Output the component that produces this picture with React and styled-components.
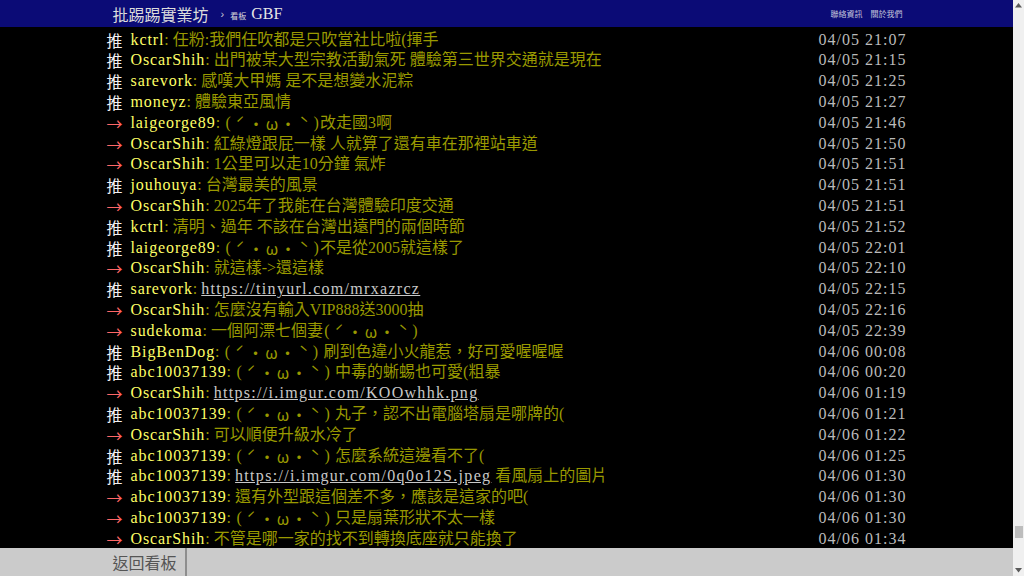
import React from "react";
import styled, { createGlobalStyle } from "styled-components";

const Global = createGlobalStyle`
  html, body {
    margin: 0;
    padding: 0;
    height: 100%;
    overflow: hidden;
    background: #000;
  }
  #root { height: 100%; }
`;

const Screen = styled.div`
  display: flex;
  height: 100vh;
  width: 100vw;
`;

const Page = styled.div`
  flex: 1;
  min-width: 0;
  display: flex;
  flex-direction: column;
  background: #000;
`;

const TopBar = styled.header`
  flex: none;
  height: 27px;
  background: #0b0b76;
`;

const BarInner = styled.div`
  width: 800px;
  height: 100%;
  margin: 0 auto;
  box-sizing: border-box;
  padding: 0 4px 0 6px;
  display: flex;
  align-items: center;
`;

const Logo = styled.a`
  font-family: "Noto Sans CJK TC", sans-serif;
  font-size: 16px;
  color: #dcdcdc;
  text-decoration: none;
  line-height: 1;
`;

const Crumb = styled.span`
  font-family: "Liberation Sans", sans-serif;
  font-size: 11px;
  color: #c8c8d8;
  margin: 0 6px 0 12px;
`;

const BoardLabel = styled.span`
  font-family: "Noto Sans CJK TC", sans-serif;
  font-size: 8px;
  color: #d8d8d8;
  margin-right: 5px;
`;

const BoardName = styled.a`
  font-family: "Liberation Serif", serif;
  font-size: 16px;
  color: #e6e6e6;
  text-decoration: none;
`;

const RightLinks = styled.nav`
  margin-left: auto;
  display: flex;
  gap: 8px;
`;

const TopLink = styled.a`
  font-family: "Noto Sans CJK TC", sans-serif;
  font-size: 8px;
  color: #c4c4dc;
  text-decoration: none;
`;

const Main = styled.main`
  flex: 1;
  min-height: 0;
  overflow: hidden;
`;

const Article = styled.div`
  width: 800px;
  margin: 0 auto;
  padding-top: 2.6px;
  font-family: "Liberation Serif", "Noto Sans CJK TC", serif;
  font-size: 16px;
  line-height: 20.8px;
`;

const Push = styled.div`
  display: flex;
  height: 20.8px;
  white-space: pre;
`;

const Tag = styled.span`
  flex: none;
  width: 24px;
  font-family: "Noto Sans CJK TC", sans-serif;
  color: ${(p) => (p.$arrow ? "#f66" : "#f2f2f2")};
`;

const UserId = styled.span`
  color: #ff6;
  letter-spacing: 0.9px;
`;

const Content = styled.span`
  color: #990;
`;

const Link = styled.a`
  color: #c8c8c8;
  text-decoration: underline;
  letter-spacing: 1.3px;
`;

const Cell = styled.span`
  display: inline-block;
  vertical-align: top;
  height: 20.8px;
  line-height: 20.8px;
  width: ${(p) => (p.$half ? 8 : 16)}px;
  text-align: center;
  font-family: ${(p) =>
    p.$half ? '"Liberation Serif", serif' : '"Noto Sans CJK TC", sans-serif'};
`;

const Time = styled.span`
  margin-left: auto;
  color: #bbb;
  letter-spacing: 1px;
`;

const NavBar = styled.footer`
  flex: none;
  height: 28px;
  background: #cbcbcb;
`;

const NavInner = styled.div`
  width: 800px;
  height: 100%;
  margin: 0 auto;
  display: flex;
  align-items: stretch;
`;

const BackLink = styled.a`
  display: flex;
  align-items: center;
  padding: 0 8px 0 6px;
  font-family: "Noto Sans CJK TC", sans-serif;
  font-size: 16px;
  color: #555;
  text-decoration: none;
`;

const Divider = styled.span`
  width: 2px;
  background: #8e8e8e;
`;

const ScrollTrack = styled.div`
  flex: none;
  width: 11px;
  background: #f0f0f0;
  display: flex;
  flex-direction: column;
  align-items: center;
`;

const ArrowBtn = styled.div`
  flex: none;
  height: 11px;
  width: 11px;
  display: flex;
  align-items: center;
  justify-content: center;
`;

const ThumbArea = styled.div`
  flex: 1;
  display: flex;
  flex-direction: column;
  justify-content: flex-end;
  padding-bottom: 27px;
`;

const Thumb = styled.div`
  width: 8px;
  height: 12px;
  background: #bdbdbd;
`;

const Tri = ({ down }) => (
  <svg width="7" height="5" viewBox="0 0 7 5">
    <polygon points={down ? "0,0 7,0 3.5,4.5" : "0,4.5 7,4.5 3.5,0"} fill="#5a5a5a" />
  </svg>
);

const Kaomoji = () => (
  <>
    <Cell $half>(</Cell>
    {["ˊ", "・", "ω", "・", "ˋ"].map((c, i) => (
      <Cell key={i}>{c}</Cell>
    ))}
    <Cell $half>)</Cell>
  </>
);

const K = "@K@";

const renderText = (text) => {
  const parts = text.split(K);
  return parts.map((p, i) => (
    <React.Fragment key={i}>
      {p}
      {i < parts.length - 1 && <Kaomoji />}
    </React.Fragment>
  ));
};

const pushes = [
  ["推", "kctrl", ": 任粉:我們任吹都是只吹當社比啦(揮手", "04/05 21:07"],
  ["推", "OscarShih", ": 出門被某大型宗教活動氣死 體驗第三世界交通就是現在", "04/05 21:15"],
  ["推", "sarevork", ": 感嘆大甲媽 是不是想變水泥粽", "04/05 21:25"],
  ["推", "moneyz", ": 體驗東亞風情", "04/05 21:27"],
  ["→", "laigeorge89", `: ${K}改走國3啊`, "04/05 21:46"],
  ["→", "OscarShih", ": 紅綠燈跟屁一樣 人就算了還有車在那裡站車道", "04/05 21:50"],
  ["→", "OscarShih", ": 1公里可以走10分鐘 氣炸", "04/05 21:51"],
  ["推", "jouhouya", ": 台灣最美的風景", "04/05 21:51"],
  ["→", "OscarShih", ": 2025年了我能在台灣體驗印度交通", "04/05 21:51"],
  ["推", "kctrl", ": 清明、過年 不該在台灣出遠門的兩個時節", "04/05 21:52"],
  ["推", "laigeorge89", `: ${K}不是從2005就這樣了`, "04/05 22:01"],
  ["→", "OscarShih", ": 就這樣->還這樣", "04/05 22:10"],
  ["推", "sarevork", ": ", "04/05 22:15", "https://tinyurl.com/mrxazrcz"],
  ["→", "OscarShih", ": 怎麼沒有輸入VIP888送3000抽", "04/05 22:16"],
  ["→", "sudekoma", `: 一個阿漂七個妻${K}`, "04/05 22:39"],
  ["推", "BigBenDog", `: ${K} 刷到色違小火龍惹，好可愛喔喔喔`, "04/06 00:08"],
  ["推", "abc10037139", `: ${K} 中毒的蜥蜴也可愛(粗暴`, "04/06 00:20"],
  ["→", "OscarShih", ": ", "04/06 01:19", "https://i.imgur.com/KOOwhhk.png"],
  ["推", "abc10037139", `: ${K} 丸子，認不出電腦塔扇是哪牌的(`, "04/06 01:21"],
  ["→", "OscarShih", ": 可以順便升級水冷了", "04/06 01:22"],
  ["推", "abc10037139", `: ${K} 怎麼系統這邊看不了(`, "04/06 01:25"],
  ["推", "abc10037139", ": ", "04/06 01:30", "https://i.imgur.com/0q0o12S.jpeg", " 看風扇上的圖片"],
  ["→", "abc10037139", ": 還有外型跟這個差不多，應該是這家的吧(", "04/06 01:30"],
  ["→", "abc10037139", `: ${K} 只是扇葉形狀不太一樣`, "04/06 01:30"],
  ["→", "OscarShih", ": 不管是哪一家的找不到轉換底座就只能換了", "04/06 01:34"],
];

export default function App() {
  return (
    <>
      <Global />
      <Screen>
        <Page>
          <TopBar>
            <BarInner>
              <Logo href="#">批踢踢實業坊</Logo>
              <Crumb>›</Crumb>
              <BoardName href="#">
                <BoardLabel>看板</BoardLabel>GBF
              </BoardName>
              <RightLinks>
                <TopLink href="#">聯絡資訊</TopLink>
                <TopLink href="#">關於我們</TopLink>
              </RightLinks>
            </BarInner>
          </TopBar>
          <Main>
            <Article>
              {pushes.map(([tag, user, content, time, url, after], i) => (
                <Push key={i}>
                  <Tag $arrow={tag === "→"}>{tag}</Tag>
                  <UserId>{user}</UserId>
                  <Content>
                    {renderText(content)}
                    {url && <Link href="#">{url}</Link>}
                    {after}
                  </Content>
                  <Time>{time}</Time>
                </Push>
              ))}
            </Article>
          </Main>
          <NavBar>
            <NavInner>
              <BackLink href="#">返回看板</BackLink>
              <Divider />
            </NavInner>
          </NavBar>
        </Page>
        <ScrollTrack>
          <ArrowBtn>
            <Tri />
          </ArrowBtn>
          <ThumbArea>
            <Thumb />
          </ThumbArea>
          <ArrowBtn>
            <Tri down />
          </ArrowBtn>
        </ScrollTrack>
      </Screen>
    </>
  );
}
